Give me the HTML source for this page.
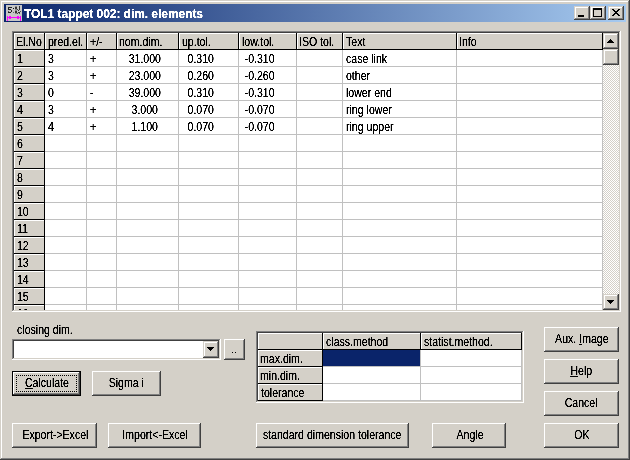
<!DOCTYPE html><html><head><meta charset="utf-8"><style>
html,body{margin:0;padding:0}
body{width:630px;height:460px;position:relative;overflow:hidden;background:#D4D0C8}
div,svg{position:absolute}
.t{font-family:"Liberation Sans",sans-serif;font-size:11px;line-height:17px;height:17px;color:#000;white-space:nowrap;letter-spacing:0px;filter:url(#th)}
.s{display:inline-block;transform:scale(0.96,1.125);transform-origin:0 12.5px}
.sc{transform-origin:50% 12.5px}
.t u{text-decoration:underline;text-underline-offset:1px}
.tt{font-family:"Liberation Sans",sans-serif;font-weight:bold;font-size:12px;line-height:18px;color:#fff;white-space:nowrap;letter-spacing:-0.05px;filter:url(#th)}
.pb{background:#D4D0C8;box-shadow:inset -1px -1px #404040,inset 1px 1px #fff,inset -2px -2px #808080}
.sb{background:#D4D0C8;box-shadow:inset -1px -1px #404040,inset 1px 1px #D4D0C8,inset -2px -2px #808080,inset 2px 2px #fff}
.chk{background:repeating-conic-gradient(#fff 0 25%,#D4D0C8 0 50%) 0 0/2px 2px}
</style></head><body>
<svg width="0" height="0" style="position:absolute"><filter id="th" x="0" y="0" width="100%" height="100%"><feComponentTransfer><feFuncA type="linear" slope="3" intercept="-0.6"/></feComponentTransfer></filter></svg>
<div style="left:0px;top:0px;width:630px;height:460px;background:#D4D0C8;"></div>
<div style="left:0px;top:0px;width:629px;height:1px;background:#D4D0C8;"></div>
<div style="left:0px;top:0px;width:1px;height:459px;background:#D4D0C8;"></div>
<div style="left:1px;top:1px;width:628px;height:1px;background:#FFFFFF;"></div>
<div style="left:1px;top:1px;width:1px;height:458px;background:#FFFFFF;"></div>
<div style="left:628px;top:1px;width:1px;height:458px;background:#808080;"></div>
<div style="left:1px;top:458px;width:628px;height:1px;background:#808080;"></div>
<div style="left:629px;top:0px;width:1px;height:460px;background:#404040;"></div>
<div style="left:0px;top:459px;width:630px;height:1px;background:#404040;"></div>
<div style="left:4px;top:4px;width:622px;height:18px;background:linear-gradient(to right,#0A246A,#A6CAF0)"></div>
<svg style="position:absolute;left:6px;top:5px" width="16" height="16" viewBox="0 0 16 16" shape-rendering="crispEdges">
<rect width="16" height="16" fill="#C6C6C6"/>
<path d="M2 2h4v1h-3v1h2v1h1v2h-1v1h-3v-1h3v-2h-3z" fill="#222"/>
<rect x="2" y="6" width="1" height="1" fill="#555"/>
<rect x="7" y="3" width="1" height="1" fill="#111"/><rect x="7" y="7" width="1" height="1" fill="#666"/>
<rect x="9" y="1" width="2" height="8" fill="#8A8A8A"/>
<rect x="9" y="2" width="2" height="2" fill="#333"/><rect x="9" y="6" width="2" height="2" fill="#333"/>
<rect x="13" y="1" width="1" height="4" fill="#333"/>
<rect x="11" y="4" width="1" height="1" fill="#444"/><rect x="12" y="5" width="1" height="1" fill="#333"/>
<rect x="14" y="6" width="1" height="1" fill="#555"/><rect x="12" y="7" width="2" height="1" fill="#333"/>
<rect x="11" y="8" width="1" height="1" fill="#444"/><rect x="13" y="8" width="1" height="1" fill="#555"/>
<rect x="2" y="11" width="1" height="1" fill="#C0DCC0"/><rect x="5" y="11" width="1" height="1" fill="#C0DCC0"/>
<rect x="11" y="11" width="1" height="1" fill="#C0DCC0"/><rect x="13" y="11" width="1" height="1" fill="#C0DCC0"/>
<rect x="1" y="11" width="1" height="5" fill="#FF00FF"/><rect x="14" y="11" width="1" height="5" fill="#FF00FF"/>
<rect x="1" y="12" width="14" height="1" fill="#FF00FF"/>
<rect x="3" y="11" width="2" height="3" fill="#FF00FF"/><rect x="11" y="11" width="2" height="3" fill="#FF00FF"/>
<rect x="2" y="12" width="1" height="1" fill="#FF00FF"/><rect x="5" y="12" width="1" height="1" fill="#FF00FF"/>
</svg>
<div class="tt" style="left:24px;top:5px">TOL1 tappet 002: dim. elements</div>
<div class="sb" style="left:574px;top:6px;width:16px;height:14px"></div>
<div class="sb" style="left:590px;top:6px;width:16px;height:14px"></div>
<div class="sb" style="left:608px;top:6px;width:16px;height:14px"></div>
<div style="left:578px;top:15px;width:6px;height:2px;background:#000;"></div>
<div style="left:593px;top:8px;width:9px;height:2px;background:#000;"></div>
<div style="left:593px;top:8px;width:7px;height:7px;border:1px solid #000;border-top-width:2px;box-sizing:content-box;width:7px;height:6px"></div>
<svg style="position:absolute;left:612px;top:9px" width="8" height="7" viewBox="0 0 8 7" shape-rendering="crispEdges"><path d="M0 0h2v1h1v1h2v-1h1v-1h2v1h-1v1h-1v1h-1v1h1v1h1v1h1v1h-2v-1h-1v-1h-2v1h-1v1h-2v-1h1v-1h1v-1h1v-1h-1v-1h-1v-1h-1z" fill="#000"/></svg>
<div style="left:12px;top:31px;width:609px;height:1px;background:#808080;"></div>
<div style="left:12px;top:31px;width:1px;height:281px;background:#808080;"></div>
<div style="left:13px;top:32px;width:607px;height:1px;background:#404040;"></div>
<div style="left:13px;top:32px;width:1px;height:279px;background:#404040;"></div>
<div style="left:620px;top:31px;width:1px;height:281px;background:#FFFFFF;"></div>
<div style="left:12px;top:311px;width:609px;height:1px;background:#FFFFFF;"></div>
<div style="left:619px;top:32px;width:1px;height:279px;background:#D4D0C8;"></div>
<div style="left:13px;top:310px;width:607px;height:1px;background:#D4D0C8;"></div>
<div style="left:14px;top:33px;width:589px;height:277px;overflow:hidden;background:#fff">
<div style="left:72px;top:0px;width:1px;height:300px;background:#C0C0C0;"></div>
<div style="left:102px;top:0px;width:1px;height:300px;background:#C0C0C0;"></div>
<div style="left:164px;top:0px;width:1px;height:300px;background:#C0C0C0;"></div>
<div style="left:224px;top:0px;width:1px;height:300px;background:#C0C0C0;"></div>
<div style="left:282px;top:0px;width:1px;height:300px;background:#C0C0C0;"></div>
<div style="left:328px;top:0px;width:1px;height:300px;background:#C0C0C0;"></div>
<div style="left:442px;top:0px;width:1px;height:300px;background:#C0C0C0;"></div>
<div style="left:588px;top:0px;width:1px;height:300px;background:#C0C0C0;"></div>
<div style="left:31px;top:33px;width:560px;height:1px;background:#C0C0C0;"></div>
<div style="left:31px;top:50px;width:560px;height:1px;background:#C0C0C0;"></div>
<div style="left:31px;top:67px;width:560px;height:1px;background:#C0C0C0;"></div>
<div style="left:31px;top:84px;width:560px;height:1px;background:#C0C0C0;"></div>
<div style="left:31px;top:101px;width:560px;height:1px;background:#C0C0C0;"></div>
<div style="left:31px;top:118px;width:560px;height:1px;background:#C0C0C0;"></div>
<div style="left:31px;top:135px;width:560px;height:1px;background:#C0C0C0;"></div>
<div style="left:31px;top:152px;width:560px;height:1px;background:#C0C0C0;"></div>
<div style="left:31px;top:169px;width:560px;height:1px;background:#C0C0C0;"></div>
<div style="left:31px;top:186px;width:560px;height:1px;background:#C0C0C0;"></div>
<div style="left:31px;top:203px;width:560px;height:1px;background:#C0C0C0;"></div>
<div style="left:31px;top:220px;width:560px;height:1px;background:#C0C0C0;"></div>
<div style="left:31px;top:237px;width:560px;height:1px;background:#C0C0C0;"></div>
<div style="left:31px;top:254px;width:560px;height:1px;background:#C0C0C0;"></div>
<div style="left:31px;top:271px;width:560px;height:1px;background:#C0C0C0;"></div>
<div style="left:31px;top:288px;width:560px;height:1px;background:#C0C0C0;"></div>
<div style="left:0px;top:0px;width:30px;height:16px;background:#D4D0C8;"></div>
<div style="left:0px;top:0px;width:30px;height:1px;background:#fff;"></div>
<div style="left:0px;top:0px;width:1px;height:16px;background:#fff;"></div>
<div style="left:30px;top:0px;width:1px;height:17px;background:#000;"></div>
<div style="left:31px;top:0px;width:41px;height:16px;background:#D4D0C8;"></div>
<div style="left:31px;top:0px;width:41px;height:1px;background:#fff;"></div>
<div style="left:31px;top:0px;width:1px;height:16px;background:#fff;"></div>
<div style="left:72px;top:0px;width:1px;height:17px;background:#000;"></div>
<div style="left:73px;top:0px;width:29px;height:16px;background:#D4D0C8;"></div>
<div style="left:73px;top:0px;width:29px;height:1px;background:#fff;"></div>
<div style="left:73px;top:0px;width:1px;height:16px;background:#fff;"></div>
<div style="left:102px;top:0px;width:1px;height:17px;background:#000;"></div>
<div style="left:103px;top:0px;width:61px;height:16px;background:#D4D0C8;"></div>
<div style="left:103px;top:0px;width:61px;height:1px;background:#fff;"></div>
<div style="left:103px;top:0px;width:1px;height:16px;background:#fff;"></div>
<div style="left:164px;top:0px;width:1px;height:17px;background:#000;"></div>
<div style="left:165px;top:0px;width:59px;height:16px;background:#D4D0C8;"></div>
<div style="left:165px;top:0px;width:59px;height:1px;background:#fff;"></div>
<div style="left:165px;top:0px;width:1px;height:16px;background:#fff;"></div>
<div style="left:224px;top:0px;width:1px;height:17px;background:#000;"></div>
<div style="left:225px;top:0px;width:57px;height:16px;background:#D4D0C8;"></div>
<div style="left:225px;top:0px;width:57px;height:1px;background:#fff;"></div>
<div style="left:225px;top:0px;width:1px;height:16px;background:#fff;"></div>
<div style="left:282px;top:0px;width:1px;height:17px;background:#000;"></div>
<div style="left:283px;top:0px;width:45px;height:16px;background:#D4D0C8;"></div>
<div style="left:283px;top:0px;width:45px;height:1px;background:#fff;"></div>
<div style="left:283px;top:0px;width:1px;height:16px;background:#fff;"></div>
<div style="left:328px;top:0px;width:1px;height:17px;background:#000;"></div>
<div style="left:329px;top:0px;width:113px;height:16px;background:#D4D0C8;"></div>
<div style="left:329px;top:0px;width:113px;height:1px;background:#fff;"></div>
<div style="left:329px;top:0px;width:1px;height:16px;background:#fff;"></div>
<div style="left:442px;top:0px;width:1px;height:17px;background:#000;"></div>
<div style="left:443px;top:0px;width:145px;height:16px;background:#D4D0C8;"></div>
<div style="left:443px;top:0px;width:145px;height:1px;background:#fff;"></div>
<div style="left:443px;top:0px;width:1px;height:16px;background:#fff;"></div>
<div style="left:588px;top:0px;width:1px;height:17px;background:#000;"></div>
<div style="left:0px;top:16px;width:589px;height:1px;background:#000;"></div>
<div style="left:0px;top:17px;width:30px;height:16px;background:#D4D0C8;"></div>
<div style="left:0px;top:17px;width:30px;height:1px;background:#fff;"></div>
<div style="left:0px;top:17px;width:1px;height:16px;background:#fff;"></div>
<div style="left:0px;top:33px;width:31px;height:1px;background:#000;"></div>
<div style="left:30px;top:17px;width:1px;height:17px;background:#000;"></div>
<div style="left:0px;top:34px;width:30px;height:16px;background:#D4D0C8;"></div>
<div style="left:0px;top:34px;width:30px;height:1px;background:#fff;"></div>
<div style="left:0px;top:34px;width:1px;height:16px;background:#fff;"></div>
<div style="left:0px;top:50px;width:31px;height:1px;background:#000;"></div>
<div style="left:30px;top:34px;width:1px;height:17px;background:#000;"></div>
<div style="left:0px;top:51px;width:30px;height:16px;background:#D4D0C8;"></div>
<div style="left:0px;top:51px;width:30px;height:1px;background:#fff;"></div>
<div style="left:0px;top:51px;width:1px;height:16px;background:#fff;"></div>
<div style="left:0px;top:67px;width:31px;height:1px;background:#000;"></div>
<div style="left:30px;top:51px;width:1px;height:17px;background:#000;"></div>
<div style="left:0px;top:68px;width:30px;height:16px;background:#D4D0C8;"></div>
<div style="left:0px;top:68px;width:30px;height:1px;background:#fff;"></div>
<div style="left:0px;top:68px;width:1px;height:16px;background:#fff;"></div>
<div style="left:0px;top:84px;width:31px;height:1px;background:#000;"></div>
<div style="left:30px;top:68px;width:1px;height:17px;background:#000;"></div>
<div style="left:0px;top:85px;width:30px;height:16px;background:#D4D0C8;"></div>
<div style="left:0px;top:85px;width:30px;height:1px;background:#fff;"></div>
<div style="left:0px;top:85px;width:1px;height:16px;background:#fff;"></div>
<div style="left:0px;top:101px;width:31px;height:1px;background:#000;"></div>
<div style="left:30px;top:85px;width:1px;height:17px;background:#000;"></div>
<div style="left:0px;top:102px;width:30px;height:16px;background:#D4D0C8;"></div>
<div style="left:0px;top:102px;width:30px;height:1px;background:#fff;"></div>
<div style="left:0px;top:102px;width:1px;height:16px;background:#fff;"></div>
<div style="left:0px;top:118px;width:31px;height:1px;background:#000;"></div>
<div style="left:30px;top:102px;width:1px;height:17px;background:#000;"></div>
<div style="left:0px;top:119px;width:30px;height:16px;background:#D4D0C8;"></div>
<div style="left:0px;top:119px;width:30px;height:1px;background:#fff;"></div>
<div style="left:0px;top:119px;width:1px;height:16px;background:#fff;"></div>
<div style="left:0px;top:135px;width:31px;height:1px;background:#000;"></div>
<div style="left:30px;top:119px;width:1px;height:17px;background:#000;"></div>
<div style="left:0px;top:136px;width:30px;height:16px;background:#D4D0C8;"></div>
<div style="left:0px;top:136px;width:30px;height:1px;background:#fff;"></div>
<div style="left:0px;top:136px;width:1px;height:16px;background:#fff;"></div>
<div style="left:0px;top:152px;width:31px;height:1px;background:#000;"></div>
<div style="left:30px;top:136px;width:1px;height:17px;background:#000;"></div>
<div style="left:0px;top:153px;width:30px;height:16px;background:#D4D0C8;"></div>
<div style="left:0px;top:153px;width:30px;height:1px;background:#fff;"></div>
<div style="left:0px;top:153px;width:1px;height:16px;background:#fff;"></div>
<div style="left:0px;top:169px;width:31px;height:1px;background:#000;"></div>
<div style="left:30px;top:153px;width:1px;height:17px;background:#000;"></div>
<div style="left:0px;top:170px;width:30px;height:16px;background:#D4D0C8;"></div>
<div style="left:0px;top:170px;width:30px;height:1px;background:#fff;"></div>
<div style="left:0px;top:170px;width:1px;height:16px;background:#fff;"></div>
<div style="left:0px;top:186px;width:31px;height:1px;background:#000;"></div>
<div style="left:30px;top:170px;width:1px;height:17px;background:#000;"></div>
<div style="left:0px;top:187px;width:30px;height:16px;background:#D4D0C8;"></div>
<div style="left:0px;top:187px;width:30px;height:1px;background:#fff;"></div>
<div style="left:0px;top:187px;width:1px;height:16px;background:#fff;"></div>
<div style="left:0px;top:203px;width:31px;height:1px;background:#000;"></div>
<div style="left:30px;top:187px;width:1px;height:17px;background:#000;"></div>
<div style="left:0px;top:204px;width:30px;height:16px;background:#D4D0C8;"></div>
<div style="left:0px;top:204px;width:30px;height:1px;background:#fff;"></div>
<div style="left:0px;top:204px;width:1px;height:16px;background:#fff;"></div>
<div style="left:0px;top:220px;width:31px;height:1px;background:#000;"></div>
<div style="left:30px;top:204px;width:1px;height:17px;background:#000;"></div>
<div style="left:0px;top:221px;width:30px;height:16px;background:#D4D0C8;"></div>
<div style="left:0px;top:221px;width:30px;height:1px;background:#fff;"></div>
<div style="left:0px;top:221px;width:1px;height:16px;background:#fff;"></div>
<div style="left:0px;top:237px;width:31px;height:1px;background:#000;"></div>
<div style="left:30px;top:221px;width:1px;height:17px;background:#000;"></div>
<div style="left:0px;top:238px;width:30px;height:16px;background:#D4D0C8;"></div>
<div style="left:0px;top:238px;width:30px;height:1px;background:#fff;"></div>
<div style="left:0px;top:238px;width:1px;height:16px;background:#fff;"></div>
<div style="left:0px;top:254px;width:31px;height:1px;background:#000;"></div>
<div style="left:30px;top:238px;width:1px;height:17px;background:#000;"></div>
<div style="left:0px;top:255px;width:30px;height:16px;background:#D4D0C8;"></div>
<div style="left:0px;top:255px;width:30px;height:1px;background:#fff;"></div>
<div style="left:0px;top:255px;width:1px;height:16px;background:#fff;"></div>
<div style="left:0px;top:271px;width:31px;height:1px;background:#000;"></div>
<div style="left:30px;top:255px;width:1px;height:17px;background:#000;"></div>
<div style="left:0px;top:272px;width:30px;height:16px;background:#D4D0C8;"></div>
<div style="left:0px;top:272px;width:30px;height:1px;background:#fff;"></div>
<div style="left:0px;top:272px;width:1px;height:16px;background:#fff;"></div>
<div style="left:0px;top:288px;width:31px;height:1px;background:#000;"></div>
<div style="left:30px;top:272px;width:1px;height:17px;background:#000;"></div>
<div class="t" style="left:2px;top:1px;"><span class="s">El.No</span></div>
<div class="t" style="left:34px;top:1px;"><span class="s">pred.el.</span></div>
<div class="t" style="left:76px;top:1px;"><span class="s">+/-</span></div>
<div class="t" style="left:105px;top:1px;"><span class="s">nom.dim.</span></div>
<div class="t" style="left:168px;top:1px;"><span class="s">up.tol.</span></div>
<div class="t" style="left:228px;top:1px;"><span class="s">low.tol.</span></div>
<div class="t" style="left:285px;top:1px;"><span class="s">ISO tol.</span></div>
<div class="t" style="left:332px;top:1px;"><span class="s">Text</span></div>
<div class="t" style="left:445px;top:1px;"><span class="s">Info</span></div>
<div class="t" style="left:3px;top:18px;"><span class="s">1</span></div>
<div class="t" style="left:3px;top:35px;"><span class="s">2</span></div>
<div class="t" style="left:3px;top:52px;"><span class="s">3</span></div>
<div class="t" style="left:3px;top:69px;"><span class="s">4</span></div>
<div class="t" style="left:3px;top:86px;"><span class="s">5</span></div>
<div class="t" style="left:3px;top:103px;"><span class="s">6</span></div>
<div class="t" style="left:3px;top:120px;"><span class="s">7</span></div>
<div class="t" style="left:3px;top:137px;"><span class="s">8</span></div>
<div class="t" style="left:3px;top:154px;"><span class="s">9</span></div>
<div class="t" style="left:3px;top:171px;"><span class="s">10</span></div>
<div class="t" style="left:3px;top:188px;"><span class="s">11</span></div>
<div class="t" style="left:3px;top:205px;"><span class="s">12</span></div>
<div class="t" style="left:3px;top:222px;"><span class="s">13</span></div>
<div class="t" style="left:3px;top:239px;"><span class="s">14</span></div>
<div class="t" style="left:3px;top:256px;"><span class="s">15</span></div>
<div class="t" style="left:3px;top:273px;"><span class="s">16</span></div>
<div class="t" style="left:34px;top:18px;"><span class="s">3</span></div>
<div class="t" style="left:76px;top:18px;"><span class="s">+</span></div>
<div class="t" style="left:101px;top:18px;width:60px;text-align:center;"><span class="s sc">31.000</span></div>
<div class="t" style="left:157px;top:18px;width:60px;text-align:center;"><span class="s sc">0.310</span></div>
<div class="t" style="left:215px;top:18px;width:61px;text-align:center;"><span class="s sc">-0.310</span></div>
<div class="t" style="left:332px;top:18px;"><span class="s">case link</span></div>
<div class="t" style="left:34px;top:35px;"><span class="s">3</span></div>
<div class="t" style="left:76px;top:35px;"><span class="s">+</span></div>
<div class="t" style="left:101px;top:35px;width:60px;text-align:center;"><span class="s sc">23.000</span></div>
<div class="t" style="left:157px;top:35px;width:60px;text-align:center;"><span class="s sc">0.260</span></div>
<div class="t" style="left:215px;top:35px;width:61px;text-align:center;"><span class="s sc">-0.260</span></div>
<div class="t" style="left:332px;top:35px;"><span class="s">other</span></div>
<div class="t" style="left:34px;top:52px;"><span class="s">0</span></div>
<div class="t" style="left:76px;top:52px;"><span class="s">-</span></div>
<div class="t" style="left:101px;top:52px;width:60px;text-align:center;"><span class="s sc">39.000</span></div>
<div class="t" style="left:157px;top:52px;width:60px;text-align:center;"><span class="s sc">0.310</span></div>
<div class="t" style="left:215px;top:52px;width:61px;text-align:center;"><span class="s sc">-0.310</span></div>
<div class="t" style="left:332px;top:52px;"><span class="s">lower end</span></div>
<div class="t" style="left:34px;top:69px;"><span class="s">3</span></div>
<div class="t" style="left:76px;top:69px;"><span class="s">+</span></div>
<div class="t" style="left:101px;top:69px;width:60px;text-align:center;"><span class="s sc">3.000</span></div>
<div class="t" style="left:157px;top:69px;width:60px;text-align:center;"><span class="s sc">0.070</span></div>
<div class="t" style="left:215px;top:69px;width:61px;text-align:center;"><span class="s sc">-0.070</span></div>
<div class="t" style="left:332px;top:69px;"><span class="s">ring lower</span></div>
<div class="t" style="left:34px;top:86px;"><span class="s">4</span></div>
<div class="t" style="left:76px;top:86px;"><span class="s">+</span></div>
<div class="t" style="left:101px;top:86px;width:60px;text-align:center;"><span class="s sc">1.100</span></div>
<div class="t" style="left:157px;top:86px;width:60px;text-align:center;"><span class="s sc">0.070</span></div>
<div class="t" style="left:215px;top:86px;width:61px;text-align:center;"><span class="s sc">-0.070</span></div>
<div class="t" style="left:332px;top:86px;"><span class="s">ring upper</span></div>
</div>
<div class="chk" style="left:603px;top:65px;width:16px;height:229px"></div>
<div class="sb" style="left:603px;top:33px;width:16px;height:16px"></div>
<div class="sb" style="left:603px;top:49px;width:16px;height:16px"></div>
<div class="sb" style="left:603px;top:294px;width:16px;height:16px"></div>
<svg style="position:absolute;left:607px;top:39px" width="7" height="4" shape-rendering="crispEdges"><path d="M3 0h1v1h1v1h1v1h1v1h-7v-1h1v-1h1v-1h1z" fill="#000"/></svg>
<svg style="position:absolute;left:607px;top:300px" width="7" height="4" shape-rendering="crispEdges"><path d="M0 0h7v1h-1v1h-1v1h-1v1h-1v-1h-1v-1h-1v-1h-1z" fill="#000"/></svg>
<div class="t" style="left:17px;top:322px;"><span class="s">closing dim.</span></div>
<div style="left:12px;top:339px;width:209px;height:21px;background:#fff;"></div>
<div style="left:12px;top:339px;width:209px;height:1px;background:#808080;"></div>
<div style="left:12px;top:339px;width:1px;height:21px;background:#808080;"></div>
<div style="left:13px;top:340px;width:207px;height:1px;background:#404040;"></div>
<div style="left:13px;top:340px;width:1px;height:19px;background:#404040;"></div>
<div style="left:12px;top:359px;width:209px;height:1px;background:#fff;"></div>
<div style="left:220px;top:339px;width:1px;height:21px;background:#fff;"></div>
<div style="left:13px;top:358px;width:207px;height:1px;background:#D4D0C8;"></div>
<div style="left:219px;top:340px;width:1px;height:19px;background:#D4D0C8;"></div>
<div class="sb" style="left:203px;top:341px;width:16px;height:17px"></div>
<svg style="position:absolute;left:207px;top:347px" width="7" height="4" shape-rendering="crispEdges"><path d="M0 0h7v1h-1v1h-1v1h-1v1h-1v-1h-1v-1h-1v-1h-1z" fill="#000"/></svg>
<div class="pb" style="left:224px;top:339px;width:21px;height:21px"></div>
<div style="left:232px;top:352px;width:1px;height:1px;background:#000;"></div>
<div style="left:235px;top:352px;width:1px;height:1px;background:#000;"></div>
<div style="left:12px;top:371px;width:69px;height:25px;background:#000;"></div>
<div class="pb" style="left:13px;top:372px;width:67px;height:23px"></div>
<div style="left:16px;top:375px;width:61px;height:17px;box-sizing:border-box;border:1px dotted #000"></div>
<div class="t" style="left:13px;top:375px;width:67px;text-align:center;"><span class="s sc"><u>C</u>alculate</span></div>
<div class="pb" style="left:92px;top:371px;width:69px;height:25px"></div>
<div class="t" style="left:92px;top:375px;width:69px;text-align:center;"><span class="s sc">Sigma i</span></div>
<div class="pb" style="left:12px;top:423px;width:85px;height:25px"></div>
<div class="t" style="left:13px;top:427px;width:85px;text-align:center;"><span class="s sc">Export-&gt;Excel</span></div>
<div class="pb" style="left:108px;top:423px;width:93px;height:25px"></div>
<div class="t" style="left:109px;top:427px;width:93px;text-align:center;"><span class="s sc">Import&lt;-Excel</span></div>
<div class="pb" style="left:256px;top:423px;width:153px;height:25px"></div>
<div class="t" style="left:256px;top:427px;width:153px;text-align:center;"><span class="s sc">standard dimension tolerance</span></div>
<div class="pb" style="left:432px;top:423px;width:74px;height:25px"></div>
<div class="t" style="left:433px;top:427px;width:74px;text-align:center;"><span class="s sc">Angle</span></div>
<div class="pb" style="left:544px;top:327px;width:75px;height:25px"></div>
<div class="t" style="left:544px;top:331px;width:75px;text-align:center;"><span class="s sc">Aux. <u>I</u>mage</span></div>
<div class="pb" style="left:544px;top:359px;width:75px;height:25px"></div>
<div class="t" style="left:544px;top:363px;width:75px;text-align:center;"><span class="s sc"><u>H</u>elp</span></div>
<div class="pb" style="left:544px;top:391px;width:75px;height:25px"></div>
<div class="t" style="left:544px;top:395px;width:75px;text-align:center;"><span class="s sc">Cancel</span></div>
<div class="pb" style="left:544px;top:423px;width:75px;height:25px"></div>
<div class="t" style="left:544px;top:427px;width:75px;text-align:center;"><span class="s sc">OK</span></div>
<div style="left:256px;top:331px;width:268px;height:1px;background:#808080;"></div>
<div style="left:256px;top:331px;width:1px;height:72px;background:#808080;"></div>
<div style="left:257px;top:332px;width:266px;height:1px;background:#404040;"></div>
<div style="left:257px;top:332px;width:1px;height:70px;background:#404040;"></div>
<div style="left:523px;top:331px;width:1px;height:72px;background:#FFFFFF;"></div>
<div style="left:256px;top:402px;width:268px;height:1px;background:#FFFFFF;"></div>
<div style="left:522px;top:332px;width:1px;height:70px;background:#D4D0C8;"></div>
<div style="left:257px;top:401px;width:266px;height:1px;background:#D4D0C8;"></div>
<div style="left:258px;top:333px;width:264px;height:68px;background:#D4D0C8;"></div>
<div style="left:323px;top:350px;width:199px;height:51px;background:#fff;"></div>
<div style="left:420px;top:350px;width:1px;height:51px;background:#C0C0C0;"></div>
<div style="left:521px;top:350px;width:1px;height:51px;background:#C0C0C0;"></div>
<div style="left:323px;top:366px;width:199px;height:1px;background:#C0C0C0;"></div>
<div style="left:323px;top:383px;width:199px;height:1px;background:#C0C0C0;"></div>
<div style="left:323px;top:400px;width:199px;height:1px;background:#C0C0C0;"></div>
<div style="left:323px;top:350px;width:97px;height:16px;background:#0A246A;"></div>
<div style="left:258px;top:333px;width:64px;height:16px;background:#D4D0C8;"></div>
<div style="left:258px;top:333px;width:64px;height:1px;background:#fff;"></div>
<div style="left:258px;top:333px;width:1px;height:16px;background:#fff;"></div>
<div style="left:322px;top:333px;width:1px;height:17px;background:#000;"></div>
<div style="left:323px;top:333px;width:97px;height:16px;background:#D4D0C8;"></div>
<div style="left:323px;top:333px;width:97px;height:1px;background:#fff;"></div>
<div style="left:323px;top:333px;width:1px;height:16px;background:#fff;"></div>
<div style="left:420px;top:333px;width:1px;height:17px;background:#000;"></div>
<div style="left:421px;top:333px;width:100px;height:16px;background:#D4D0C8;"></div>
<div style="left:421px;top:333px;width:100px;height:1px;background:#fff;"></div>
<div style="left:421px;top:333px;width:1px;height:16px;background:#fff;"></div>
<div style="left:521px;top:333px;width:1px;height:17px;background:#000;"></div>
<div style="left:258px;top:349px;width:264px;height:1px;background:#000;"></div>
<div style="left:258px;top:350px;width:64px;height:16px;background:#D4D0C8;"></div>
<div style="left:258px;top:350px;width:64px;height:1px;background:#fff;"></div>
<div style="left:258px;top:350px;width:1px;height:16px;background:#fff;"></div>
<div style="left:258px;top:366px;width:65px;height:1px;background:#000;"></div>
<div style="left:322px;top:350px;width:1px;height:17px;background:#000;"></div>
<div style="left:258px;top:367px;width:64px;height:16px;background:#D4D0C8;"></div>
<div style="left:258px;top:367px;width:64px;height:1px;background:#fff;"></div>
<div style="left:258px;top:367px;width:1px;height:16px;background:#fff;"></div>
<div style="left:258px;top:383px;width:65px;height:1px;background:#000;"></div>
<div style="left:322px;top:367px;width:1px;height:17px;background:#000;"></div>
<div style="left:258px;top:384px;width:64px;height:16px;background:#D4D0C8;"></div>
<div style="left:258px;top:384px;width:64px;height:1px;background:#fff;"></div>
<div style="left:258px;top:384px;width:1px;height:16px;background:#fff;"></div>
<div style="left:258px;top:400px;width:65px;height:1px;background:#000;"></div>
<div style="left:322px;top:384px;width:1px;height:17px;background:#000;"></div>
<div class="t" style="left:326px;top:334px;"><span class="s">class.method</span></div>
<div class="t" style="left:424px;top:334px;"><span class="s">statist.method.</span></div>
<div class="t" style="left:260px;top:351px;"><span class="s">max.dim.</span></div>
<div class="t" style="left:260px;top:368px;"><span class="s">min.dim.</span></div>
<div class="t" style="left:261px;top:385px;"><span class="s">tolerance</span></div>
</body></html>
